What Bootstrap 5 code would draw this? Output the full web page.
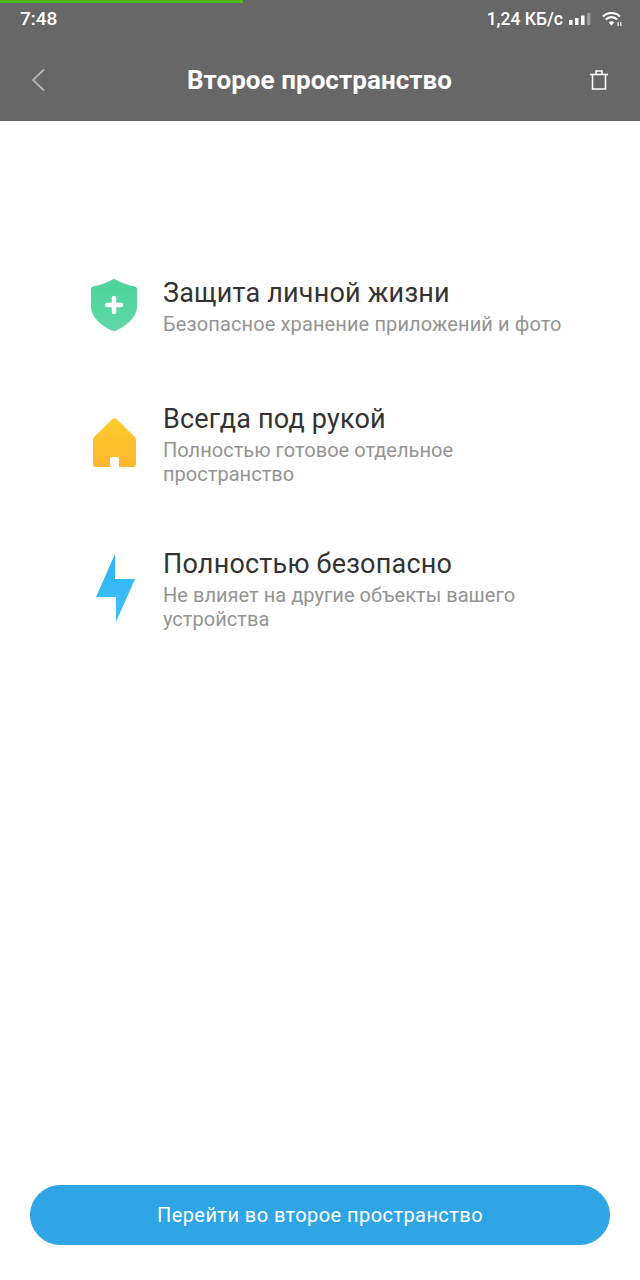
<!DOCTYPE html>
<html lang="ru">

<head>
  <meta charset="UTF-8">
  <meta name="viewport" content="width=device-width, initial-scale=1.0">
  <title>Второе пространство</title>
  <link href="https://cdn.jsdelivr.net/npm/bootstrap@5.3.2/dist/css/bootstrap.min.css" rel="stylesheet">
  <style>
    body {
      font-family: Roboto, "Liberation Sans", sans-serif;
      background-color: #ffffff;
    }

    .screen {
      height: 1280px;
    }

    .top-area {
      height: 121px;
      background-color: #676767;
      color: #ffffff;
    }

    .progress-line {
      width: 243px;
      height: 3px;
      background-color: #4fb80c;
    }

    .status-row {
      height: 32px;
      padding: 0 18px 0 20px;
      font-weight: 500;
    }

    .status-time {
      font-size: 19px;
    }

    .status-right {
      gap: 6px;
      font-size: 17.5px;
    }

    .wifi-icon {
      margin-left: 5px;
    }

    .title-row {
      height: 86px;
      padding: 4px 31px 0 31px;
    }

    .page-title {
      font-size: 26px;
      font-weight: 700;
      line-height: 1;
      margin: 0 0 0 5px;
      letter-spacing: .05px;
    }

    .features {
      padding: 155px 30px 0 90px;
    }

    .feature {
      gap: 25px;
    }

    .feature-first {
      margin-bottom: 66px;
    }

    .feature-next {
      margin-bottom: 61px;
    }

    .feature-icon {
      flex: 0 0 48px;
      width: 48px;
    }

    .feature-title {
      font-size: 27px;
      line-height: 34px;
      margin-bottom: 2px;
      color: #333333;
      letter-spacing: .2px;
    }

    .feature-text {
      font-size: 20px;
      line-height: 24px;
      color: #949494;
      letter-spacing: .12px;
    }

    .feature-text-tight {
      letter-spacing: .03px;
    }

    .go-btn {
      width: 580px;
      height: 60px;
      margin: 0 30px 35px;
      border-radius: 30px;
      background-color: #2fa5e6;
      border-color: #2fa5e6;
      color: #ffffff;
      font-size: 20px;
      letter-spacing: .43px;
    }
  </style>
</head>

<body>
  <div class="screen d-flex flex-column">
    <header class="top-area">
      <div class="progress-line"></div>
      <div class="status-row d-flex justify-content-between align-items-center">
        <span class="status-time">7:48</span>
        <span class="status-right d-flex align-items-center">
          1,24 КБ/с
          <svg width="22" height="12" viewBox="0 0 22 12">
            <rect x="0" y="7" width="3.5" height="5" fill="#fff"/>
            <rect x="6" y="5" width="3.5" height="7" fill="#fff"/>
            <rect x="12" y="2.500" width="3.5" height="9.500" fill="#fff"/>
            <rect x="18" y="0" width="3.5" height="12" fill="#9a9a9a"/>
          </svg>
          <svg class="wifi-icon" width="20" height="14" viewBox="0 0 20 14">
            <path d="M1 4.500 A12 12 0 0 1 18 4.500" fill="none" stroke="#fff" stroke-width="2.200"/>
            <path d="M3.800 7.500 A8 8 0 0 1 15.200 7.500" fill="none" stroke="#fff" stroke-width="2.200"/>
            <path d="M6.800 10.400 A4 4 0 0 1 12.200 10.400 L9.500 13.500 Z" fill="#fff"/>
            <rect x="15.500" y="10" width="1.500" height="4" fill="#ddd"/>
            <rect x="18" y="10" width="1.500" height="4" fill="#ddd"/>
          </svg>
        </span>
      </div>
      <div class="title-row d-flex justify-content-between align-items-center">
        <svg width="14" height="24" viewBox="0 0 14 24">
          <path d="M13 1.500 L2 12 L13 22.500" fill="none" stroke="#b4b4b4" stroke-width="1.800"/>
        </svg>
        <h1 class="page-title">Второе пространство</h1>
        <svg width="20" height="20" viewBox="0 0 20 20">
          <path d="M1 4.500 H19 M7 4.500 V1 H13 V4.500 M3.500 4.500 V19 H16.500 V4.500" fill="none" stroke="#fff" stroke-width="1.500"/>
        </svg>
      </div>
    </header>

    <main class="features d-flex flex-column flex-grow-1">
      <div class="feature feature-first d-flex align-items-center">
        <div class="feature-icon">
          <svg width="48" height="54" viewBox="0 1 48 54">
            <defs>
              <linearGradient id="shieldFill" x1="0" y1="0" x2="0" y2="1">
                <stop offset="0" stop-color="#4cd39a"/>
                <stop offset="1" stop-color="#5ed8a6"/>
              </linearGradient>
            </defs>
            <path d="M24 1 Q25 1 26 1.700 Q35 7 45 8.500 Q47 9 47 11 V28 C47 40 35 49 25 53 Q24 53.500 23 53 C13 49 1 40 1 28 V11 Q1 9 3 8.500 Q13 7 22 1.700 Q23 1 24 1 Z" fill="url(#shieldFill)"/>
            <path d="M24 20 V34 M17 27 H31" stroke="#fff" stroke-width="4.500" stroke-linecap="round"/>
          </svg>
        </div>
        <div>
          <div class="feature-title">Защита личной жизни</div>
          <div class="feature-text">Безопасное хранение приложений и фото</div>
        </div>
      </div>

      <div class="feature feature-next d-flex align-items-center">
        <div class="feature-icon">
          <svg width="48" height="54" viewBox="0 0 48 54">
            <defs>
              <linearGradient id="houseFill" x1="0" y1="0" x2="0" y2="1">
                <stop offset="0" stop-color="#ffcb2c"/>
                <stop offset="1" stop-color="#ffb72f"/>
              </linearGradient>
            </defs>
            <path d="M22 2.500 Q24.500 0 27 2.500 L45 20 Q46 21 46 23 V47 Q46 50 43 50 H29 V42 Q29 40 27 40 H22 Q20 40 20 42 V50 H6 Q3 50 3 47 V23 Q3 21 4 20 Z" fill="url(#houseFill)"/>
          </svg>
        </div>
        <div>
          <div class="feature-title">Всегда под рукой</div>
          <div class="feature-text feature-text-tight">Полностью готовое отдельное<br>пространство</div>
        </div>
      </div>

      <div class="feature d-flex align-items-center">
        <div class="feature-icon">
          <svg width="48" height="70" viewBox="0 0 48 70">
            <defs>
              <linearGradient id="boltFill" x1="0" y1="0" x2="0" y2="1">
                <stop offset="0" stop-color="#2fb4f8"/>
                <stop offset="1" stop-color="#3fc0fb"/>
              </linearGradient>
            </defs>
            <path d="M25 0 V25 H45 L26 68 V43 H6 Z" fill="url(#boltFill)"/>
          </svg>
        </div>
        <div>
          <div class="feature-title">Полностью безопасно</div>
          <div class="feature-text feature-text-tight">Не влияет на другие объекты вашего<br>устройства</div>
        </div>
      </div>
    </main>

    <button type="button" class="btn go-btn">Перейти во второе пространство</button>
  </div>
  <script src="https://cdn.jsdelivr.net/npm/bootstrap@5.3.2/dist/js/bootstrap.bundle.min.js"></script>
</body>

</html>
